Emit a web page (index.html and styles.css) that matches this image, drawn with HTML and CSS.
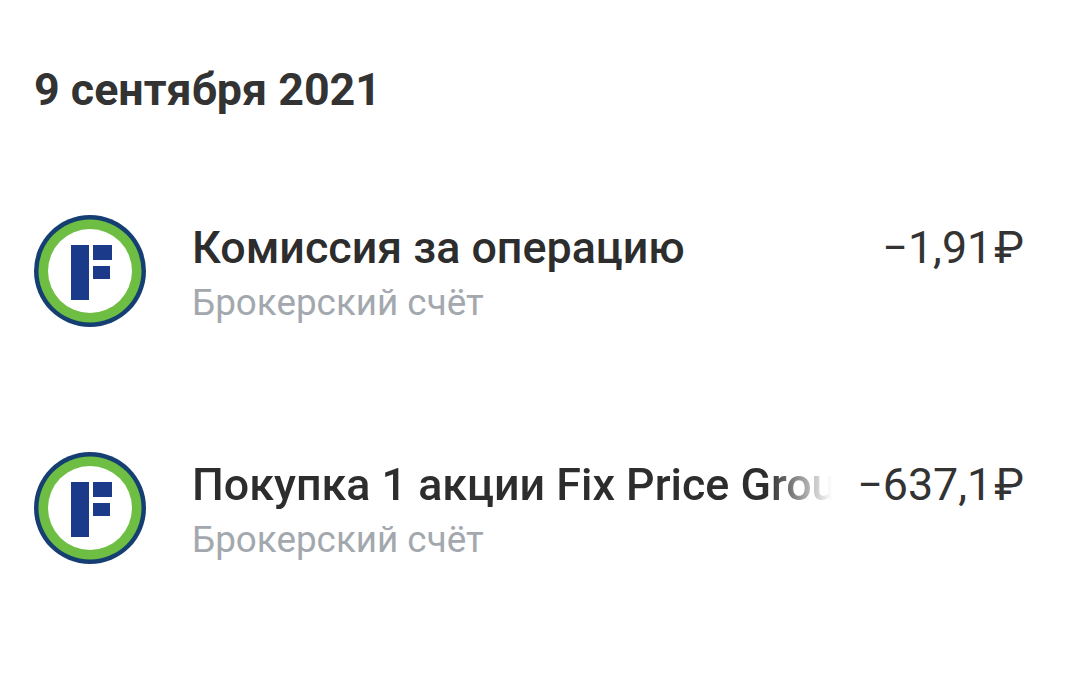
FILE: index.html
```html
<!DOCTYPE html>
<html lang="ru">
<head>
	<meta charset="UTF-8">
	<title>Операции</title>
	<link rel="stylesheet" href="styles.css">
</head>
<body>
	<div id="container">
		<h1 class="date">9 сентября 2021</h1>
		<ul class="list">
			<li class="row">
				<svg class="logo" viewBox="0 0 112 112">
					<circle cx="56" cy="56" r="56" fill="#153f72"/>
					<circle cx="56" cy="56" r="51.5" fill="#6fbe44"/>
					<circle cx="56" cy="56" r="42" fill="#fff"/>
					<path d="M37 30h18v55H37zM59 30h19v15H59zM59 51h17v13H59z" fill="#1c3a8a"/>
				</svg>
				<div class="info">
					<div class="name">Комиссия за операцию</div>
					<div class="account">Брокерский счёт</div>
				</div>
				<div class="sum">−1,91<span class="cur">₽</span></div>
			</li>
			<li class="row">
				<svg class="logo" viewBox="0 0 112 112">
					<circle cx="56" cy="56" r="56" fill="#153f72"/>
					<circle cx="56" cy="56" r="51.5" fill="#6fbe44"/>
					<circle cx="56" cy="56" r="42" fill="#fff"/>
					<path d="M37 30h18v55H37zM59 30h19v15H59zM59 51h17v13H59z" fill="#1c3a8a"/>
				</svg>
				<div class="info">
					<div class="name fade">Покупка 1 акции Fix Price Group</div>
					<div class="account">Брокерский счёт</div>
				</div>
				<div class="sum">−637,1<span class="cur">₽</span></div>
			</li>
		</ul>
	</div>
</body>
</html>
```

FILE: styles.css
```css
*{
	margin: 0;
	padding: 0;
}
ul, ol{
	list-style: none;
}
html, body{
	height: 100%;
	overflow: hidden;
	background: #fff;
}
body{
	font-family: Roboto, "Liberation Sans", "Noto Sans", sans-serif;
	color: #333333;
}
#container{
	padding: 63px 44px 0 34px;
}
.date{
	font-size: 44.8px;
	line-height: 54px;
	font-weight: 700;
	color: #333;
}
.list{
	margin-top: 98px;
	display: flex;
	flex-direction: column;
	gap: 125px;
}
.row{
	display: flex;
	align-items: flex-start;
	height: 112px;
}
.logo{
	width: 112px;
	height: 112px;
	flex: none;
}
.info{
	margin-left: 46px;
	width: 640px;
	flex: none;
}
.name{
	font-size: 44.8px;
	line-height: 54px;
	font-weight: 500;
	color: #2d2d2d;
	white-space: nowrap;
	overflow: hidden;
	margin-top: 6px;
}
.fade{
	-webkit-mask-image: linear-gradient(to right, #000 90%, transparent 100%);
	mask-image: linear-gradient(to right, #000 90%, transparent 100%);
}
.account{
	font-size: 36.8px;
	line-height: 40px;
	color: #a3a8ae;
	margin-top: 8px;
}
.sum{
	margin-left: auto;
	margin-top: 10px;
	font-size: 44.8px;
	line-height: 46px;
	color: #333;
	white-space: nowrap;
}
.cur{
	margin-left: 2px;
}
```
